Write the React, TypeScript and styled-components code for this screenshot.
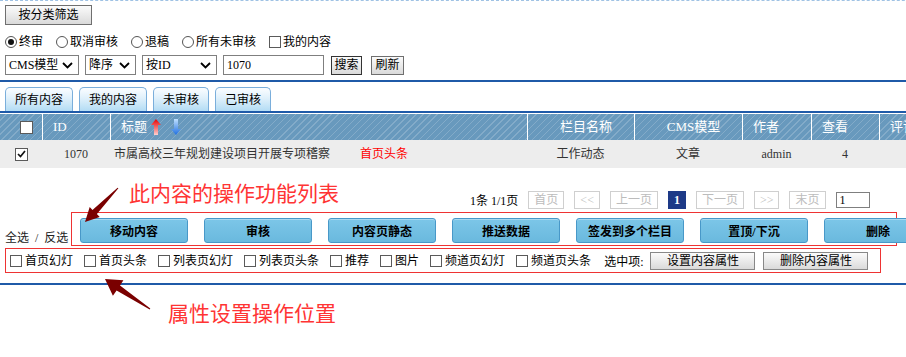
import React from 'react';
import styled, { createGlobalStyle } from 'styled-components';

const GlobalStyle = createGlobalStyle`
  html, body {
    margin: 0;
    padding: 0;
    background: #fff;
    overflow: hidden;
  }
  body {
    font-family: "Liberation Serif", "Noto Sans CJK SC", serif;
    font-size: 12px;
    color: #000;
  }
`;

const BLUE_LINE = '#1f5aa8';

const Page = styled.div`
  position: relative;
  width: 1000px;
  height: 356px;
  border-top: 1px dashed #9fc2e4;
`;

const FilterArea = styled.div`
  padding: 4px 5px 0;
`;

const GrayButton = styled.button<{ $w: number; $h?: number }>`
  display: block;
  width: ${(p) => p.$w}px;
  height: ${(p) => p.$h ?? 20}px;
  margin: 0;
  padding: 0;
  border: 1px solid #6f6f6f;
  background: linear-gradient(#fbfbfb, #dadada);
  font: inherit;
  font-size: 12px;
  line-height: ${(p) => (p.$h ?? 20) - 2}px;
  color: #000;
  white-space: nowrap;
  flex-shrink: 0;
`;

const OptionRow = styled.div`
  display: flex;
  align-items: center;
  height: 16px;
  margin-top: 9px;
`;

const Option = styled.label`
  display: flex;
  align-items: center;
  gap: 2px;
  margin-right: 13px;
  line-height: 16px;
  white-space: nowrap;
`;

const RadioMark = styled.span<{ $checked?: boolean }>`
  position: relative;
  width: 10px;
  height: 10px;
  border: 1px solid #555;
  border-radius: 50%;
  background: #fff;
  &::after {
    content: '';
    display: ${(p) => (p.$checked ? 'block' : 'none')};
    position: absolute;
    left: 2px;
    top: 2px;
    width: 6px;
    height: 6px;
    border-radius: 50%;
    background: #111;
  }
`;

const Box = styled.span<{ $size?: number }>`
  display: flex;
  align-items: center;
  justify-content: center;
  width: ${(p) => p.$size ?? 10}px;
  height: ${(p) => p.$size ?? 10}px;
  border: 1px solid #5a5a5a;
  background: #fff;
  flex-shrink: 0;
`;

const SearchRow = styled.div`
  display: flex;
  align-items: center;
  gap: 6px;
  height: 20px;
  margin-top: 5px;
`;

const Select = styled.div<{ $w: number }>`
  display: flex;
  align-items: center;
  justify-content: space-between;
  box-sizing: border-box;
  width: ${(p) => p.$w}px;
  height: 20px;
  padding: 0 5px 0 3px;
  border: 1px solid #7f7f7f;
  background: #fff;
  line-height: 18px;
  white-space: nowrap;
`;

const TextInput = styled.div<{ $w: number; $h?: number }>`
  box-sizing: border-box;
  width: ${(p) => p.$w}px;
  height: ${(p) => p.$h ?? 20}px;
  padding: 0 3px;
  border: 1px solid #7f7f7f;
  background: #fff;
  line-height: ${(p) => (p.$h ?? 20) - 2}px;
  font-size: 12px;
  flex-shrink: 0;
`;

const Divider = styled.div<{ $top: number }>`
  height: 2px;
  margin-top: ${(p) => p.$top}px;
  background: ${BLUE_LINE};
`;

const TabBar = styled.div`
  display: flex;
  gap: 6px;
  margin-top: 5px;
  padding-left: 5px;
  border-bottom: 2px solid ${BLUE_LINE};
`;

const Tab = styled.div`
  height: 23px;
  padding: 0 9px;
  border: 1px solid #7aaedb;
  border-bottom: none;
  border-radius: 5px 5px 0 0;
  background: linear-gradient(#fbfdff 0%, #dff0fb 45%, #b3dcf4 100%);
  line-height: 24px;
`;

const COLS = '42px 68px 417px 107px 108px 69px 68px 121px';

const HeadRow = styled.div`
  display: grid;
  grid-template-columns: ${COLS};
  height: 26px;
  margin-top: 1px;
  background-color: #6899bd;
  background-image: repeating-linear-gradient(
    135deg,
    transparent 0px,
    transparent 4px,
    rgba(255, 255, 255, 0.18) 4px,
    rgba(255, 255, 255, 0.18) 5px
  );
`;

const HeadCell = styled.div<{ $align?: 'left' | 'center' }>`
  display: flex;
  align-items: center;
  justify-content: ${(p) => (p.$align === 'center' ? 'center' : 'flex-start')};
  gap: 4px;
  padding-left: 10px;
  border-left: 1px solid #fff;
  color: #fff;
  font-size: 13px;
  line-height: 26px;
  white-space: nowrap;
  overflow: hidden;
  &:first-child {
    border-left: none;
    padding-left: 20px;
  }
`;

const DataRow = styled.div`
  display: grid;
  grid-template-columns: ${COLS};
  height: 28px;
  background: #ededed;
  color: #333;
`;

const DataCell = styled.div<{ $align?: 'left' | 'center' }>`
  display: flex;
  align-items: center;
  justify-content: ${(p) => (p.$align === 'left' ? 'flex-start' : 'center')};
  padding-left: ${(p) => (p.$align === 'left' ? '4px' : '0')};
  line-height: 28px;
  white-space: nowrap;
`;

const Marker = styled.span`
  margin-left: 30px;
  color: #f00;
`;

const Pager = styled.div`
  display: flex;
  align-items: center;
  gap: 10px;
  height: 18px;
  margin-top: 23px;
  padding-left: 470px;
  white-space: nowrap;
`;

const PageBox = styled.span<{ $active?: boolean }>`
  box-sizing: border-box;
  min-width: 18px;
  height: 18px;
  padding: 0 5px;
  border: 1px solid ${(p) => (p.$active ? '#1d3a87' : '#cfcfcf')};
  background: ${(p) => (p.$active ? '#1d3a87' : '#fff')};
  color: ${(p) => (p.$active ? '#fff' : '#bcbcbc')};
  font-weight: ${(p) => (p.$active ? 'bold' : 'normal')};
  line-height: 16px;
  text-align: center;
`;

const ActionRow = styled.div`
  display: flex;
  align-items: flex-end;
  margin-top: 3px;
`;

const SelectAll = styled.div`
  width: 66px;
  padding-left: 5px;
  line-height: 16px;
  color: #222;
  word-spacing: 3px;
  white-space: nowrap;
  flex-shrink: 0;
`;

const ActionBox = styled.div`
  display: flex;
  gap: 16px;
  box-sizing: border-box;
  width: 826px;
  height: 34px;
  padding: 5px 8px 0;
  border: 1px solid #ee3333;
  flex-shrink: 0;
`;

const ActionButton = styled.button`
  flex-shrink: 0;
  width: 108px;
  height: 25px;
  margin: 0;
  padding: 0;
  border: 1px solid #4898c8;
  border-radius: 3px;
  background: linear-gradient(#7cc6e8, #6ab9de);
  box-shadow: inset 0 1px 0 rgba(255, 255, 255, 0.35);
  font: inherit;
  font-size: 12px;
  font-weight: bold;
  color: #000;
  white-space: nowrap;
`;

const AttrBox = styled.div`
  display: flex;
  align-items: center;
  box-sizing: border-box;
  width: 876px;
  height: 25px;
  margin: 2px 0 0 5px;
  padding-left: 4px;
  border: 1px solid #ee3333;
  white-space: nowrap;
`;

const Attr = styled.label`
  display: flex;
  align-items: center;
  gap: 3px;
  margin-right: 11px;
  line-height: 16px;
  flex-shrink: 0;
`;

const Selected = styled.span`
  margin-left: 2px;
  flex-shrink: 0;
`;

const AttrButtons = styled.div`
  display: flex;
  gap: 8px;
  margin-left: 7px;
`;

const Note = styled.div<{ $left: number; $top: number }>`
  position: absolute;
  left: ${(p) => p.$left}px;
  top: ${(p) => p.$top}px;
  color: #ff3434;
  font-family: "Noto Sans CJK SC", sans-serif;
  font-size: 21px;
  line-height: 24px;
  white-space: nowrap;
`;

const ArrowSvg = styled.svg<{ $left: number; $top: number }>`
  position: absolute;
  left: ${(p) => p.$left}px;
  top: ${(p) => p.$top}px;
  overflow: visible;
`;

function Chevron() {
  return (
    <svg width="11" height="7" viewBox="0 0 11 7">
      <polyline points="1,1 5.5,5.5 10,1" fill="none" stroke="#000" strokeWidth="1.8" />
    </svg>
  );
}

function Check() {
  return (
    <svg width="9" height="8" viewBox="0 0 9 8">
      <polyline points="1,4 3.5,6.5 8,1" fill="none" stroke="#111" strokeWidth="1.7" />
    </svg>
  );
}

function SortArrows() {
  return (
    <svg width="32" height="18" viewBox="0 0 32 18">
      <defs>
        <linearGradient id="up" x1="0" y1="0" x2="0" y2="1">
          <stop offset="0" stopColor="#e40000" />
          <stop offset="1" stopColor="#ffd0d0" />
        </linearGradient>
        <linearGradient id="down" x1="0" y1="0" x2="0" y2="1">
          <stop offset="0" stopColor="#bfe0ff" />
          <stop offset="1" stopColor="#1f6fe0" />
        </linearGradient>
      </defs>
      <polygon points="5,1 10,7 7,7 7,17 3,17 3,7 0,7" fill="url(#up)" />
      <polygon points="23,1 27,1 27,11 30,11 25,17 20,11 23,11" fill="url(#down)" />
    </svg>
  );
}

const attrs = ['首页幻灯', '首页头条', '列表页幻灯', '列表页头条', '推荐', '图片', '频道页幻灯', '频道页头条'];
const actions = ['移动内容', '审核', '内容页静态', '推送数据', '签发到多个栏目', '置顶/下沉', '删除'];

export default function App() {
  return (
    <>
      <GlobalStyle />
      <Page>
        <FilterArea>
          <GrayButton $w={87}>按分类筛选</GrayButton>
          <OptionRow>
            <Option><RadioMark $checked />终审</Option>
            <Option><RadioMark />取消审核</Option>
            <Option><RadioMark />退稿</Option>
            <Option><RadioMark />所有未审核</Option>
            <Option><Box />我的内容</Option>
          </OptionRow>
          <SearchRow>
            <Select $w={74}>CMS模型<Chevron /></Select>
            <Select $w={51}>降序<Chevron /></Select>
            <Select $w={75}>按ID<Chevron /></Select>
            <TextInput $w={101}>1070</TextInput>
            <GrayButton $w={31} $h={19} style={{ marginLeft: 1, borderColor: '#333' }}>搜索</GrayButton>
            <GrayButton $w={33} $h={19} style={{ marginLeft: 3 }}>刷新</GrayButton>
          </SearchRow>
        </FilterArea>

        <Divider $top={5} />

        <TabBar>
          <Tab>所有内容</Tab>
          <Tab>我的内容</Tab>
          <Tab>未审核</Tab>
          <Tab>己审核</Tab>
        </TabBar>

        <HeadRow>
          <HeadCell><Box $size={11} /></HeadCell>
          <HeadCell>ID</HeadCell>
          <HeadCell>标题<SortArrows /></HeadCell>
          <HeadCell $align="center">栏目名称</HeadCell>
          <HeadCell $align="center">CMS模型</HeadCell>
          <HeadCell>作者</HeadCell>
          <HeadCell>查看</HeadCell>
          <HeadCell>评论</HeadCell>
        </HeadRow>
        <DataRow>
          <DataCell><Box $size={11}><Check /></Box></DataCell>
          <DataCell>1070</DataCell>
          <DataCell $align="left">
            市属高校三年规划建设项目开展专项稽察<Marker>首页头条</Marker>
          </DataCell>
          <DataCell>工作动态</DataCell>
          <DataCell>文章</DataCell>
          <DataCell>admin</DataCell>
          <DataCell>4</DataCell>
          <DataCell />
        </DataRow>

        <Pager>
          <span>1条 1/1页</span>
          <PageBox>首页</PageBox>
          <PageBox>&lt;&lt;</PageBox>
          <PageBox>上一页</PageBox>
          <PageBox $active>1</PageBox>
          <PageBox>下一页</PageBox>
          <PageBox>&gt;&gt;</PageBox>
          <PageBox>末页</PageBox>
          <TextInput $w={34} $h={16}>1</TextInput>
        </Pager>

        <ActionRow>
          <SelectAll>全选 / 反选</SelectAll>
          <ActionBox>
            {actions.map((a) => (
              <ActionButton key={a}>{a}</ActionButton>
            ))}
          </ActionBox>
        </ActionRow>

        <AttrBox>
          {attrs.map((a) => (
            <Attr key={a}><Box />{a}</Attr>
          ))}
          <Selected>选中项:</Selected>
          <AttrButtons>
            <GrayButton $w={105} $h={18} style={{ borderColor: '#888' }}>设置内容属性</GrayButton>
            <GrayButton $w={105} $h={18} style={{ borderColor: '#888' }}>删除内容属性</GrayButton>
          </AttrButtons>
        </AttrBox>

        <Divider $top={10} />

        <Note $left={129} $top={179}>此内容的操作功能列表</Note>
        <ArrowSvg $left={80} $top={183} width="42" height="44" viewBox="80 183 42 44">
          <polygon
            points="118.4,187.3 96.9,213.1 99.7,215.9 85,221 89.7,206.1 92.5,208.9 117.6,186.7"
            fill="#7a0000"
          />
        </ArrowSvg>

        <Note $left={168} $top={299}>属性设置操作位置</Note>
        <ArrowSvg $left={100} $top={274} width="55" height="38" viewBox="100 274 55 38">
          <polygon
            points="150.3,307.5 120.0,284.4 123.4,279.3 105,278 112.9,294.8 116.6,289.4 149.7,308.5"
            fill="#7a0000"
          />
        </ArrowSvg>
      </Page>
    </>
  );
}
